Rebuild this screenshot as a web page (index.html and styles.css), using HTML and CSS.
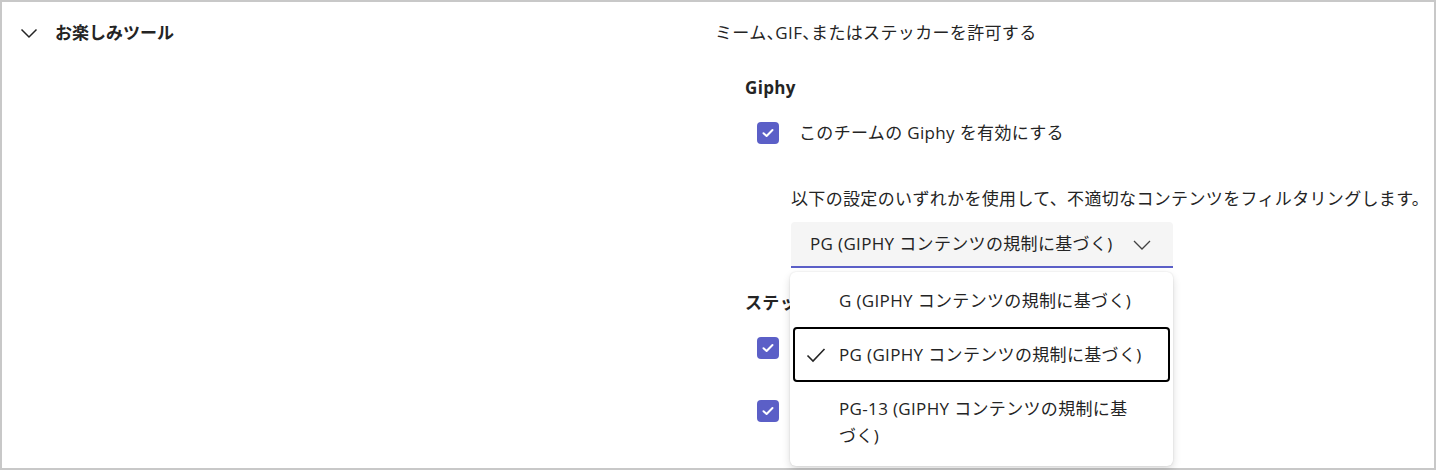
FILE: index.html
```html
<!DOCTYPE html>
<html lang="ja">
<head>
    <meta charset="UTF-8">
    <meta name="viewport" content="width=device-width, initial-scale=1.0">
    <title>チームの設定</title>
    <link rel="stylesheet" href="styles.css">
</head>
<body>
<div class="settings-frame">
    <div class="setting-section">
        <!-- Collapsible section header -->
        <div class="section-head">
            <svg class="chevron" width="18" height="12" viewBox="0 0 18 12">
                <path d="M1.5 2.5 L9 10 L16.5 2.5" fill="none" stroke="#242424" stroke-width="1.5"/>
            </svg>
            <span class="section-title">お楽しみツール</span>
        </div>

        <div class="section-body">
            <div class="section-desc">ミーム、GIF、またはステッカーを許可する</div>

            <div class="group-title">Giphy</div>
            <label class="check-row">
                <span class="checkbox">
                    <svg width="12" height="10" viewBox="0 0 12 10"><path d="M1.5 5.2 L4.6 8 L10.5 2" fill="none" stroke="#fff" stroke-width="2" stroke-linecap="round" stroke-linejoin="round"/></svg>
                </span>
                <span>このチームの Giphy を有効にする</span>
            </label>

            <div class="filter-note">以下の設定のいずれかを使用して、不適切なコンテンツをフィルタリングします。</div>

            <div class="dropdown-wrap">
                <button class="dropdown">
                    <span>PG (GIPHY コンテンツの規制に基づく)</span>
                    <svg class="dropdown-chevron" width="18" height="10" viewBox="0 0 18 10">
                        <path d="M1 1 L9 9 L17 1" fill="none" stroke="#424242" stroke-width="1.3"/>
                    </svg>
                </button>

                <!-- Open listbox of rating options -->
                <ul class="listbox">
                    <li class="option">
                        <span class="option-check"></span>
                        <span>G (GIPHY コンテンツの規制に基づく)</span>
                    </li>
                    <li class="option selected">
                        <span class="option-check">
                            <svg width="20" height="16" viewBox="0 0 20 16"><path d="M1.5 8.5 L7 14 L18.5 2" fill="none" stroke="#242424" stroke-width="1.6"/></svg>
                        </span>
                        <span>PG (GIPHY コンテンツの規制に基づく)</span>
                    </li>
                    <li class="option">
                        <span class="option-check"></span>
                        <span>PG-13 (GIPHY コンテンツの規制に基<br>づく)</span>
                    </li>
                </ul>
            </div>

            <div class="group-title stickers">ステッカー</div>
            <label class="check-row">
                <span class="checkbox">
                    <svg width="12" height="10" viewBox="0 0 12 10"><path d="M1.5 5.2 L4.6 8 L10.5 2" fill="none" stroke="#fff" stroke-width="2" stroke-linecap="round" stroke-linejoin="round"/></svg>
                </span>
                <span>このチームのステッカーを有効にする</span>
            </label>
            <label class="check-row second">
                <span class="checkbox">
                    <svg width="12" height="10" viewBox="0 0 12 10"><path d="M1.5 5.2 L4.6 8 L10.5 2" fill="none" stroke="#fff" stroke-width="2" stroke-linecap="round" stroke-linejoin="round"/></svg>
                </span>
                <span>カスタム ミームの使用を許可する</span>
            </label>
        </div>
    </div>
</div>
</body>
</html>
```

FILE: styles.css
```css
html, body {
    margin: 0;
    height: 100%;
}

body {
    font-family: 'Open Sans', 'Noto Sans CJK JP', sans-serif;
    font-size: 17px;
    line-height: 24px;
    letter-spacing: 0.02em;
    color: #242424;
    background-color: #fff;
    overflow: hidden;
}

.settings-frame {
    box-sizing: border-box;
    height: 100%;
    border: 2px solid #c8c8c8;
    background-color: #fff;
}

.setting-section {
    display: flex;
    padding-top: 19px;
}

.section-head {
    width: 713px;
    display: flex;
    align-items: center;
    padding-left: 18px;
    box-sizing: border-box;
    height: 24px;
}

.chevron {
    margin-right: 17px;
}

.section-title {
    font-weight: 700;
    letter-spacing: 0;
}

.section-body {
    flex-grow: 1;
}

/* half-width commas in the short description line */
.section-desc {
    font-feature-settings: "halt";
    word-spacing: 2px;
}

.group-title {
    font-weight: 700;
    margin: 31px 0 0 30px;
}

.group-title.stickers {
    margin-top: 23px;
}

.check-row {
    display: flex;
    align-items: center;
    gap: 20px;
    margin: 21px 0 0 42px;
}

.check-row.second {
    margin-top: 39px;
}

.checkbox {
    width: 22px;
    height: 22px;
    border-radius: 4px;
    background-color: #5b5fc7;
    display: flex;
    align-items: center;
    justify-content: center;
    flex-shrink: 0;
}

.filter-note {
    margin: 42px 0 0 76px;
}

.dropdown-wrap {
    position: relative;
    width: 382px;
    margin: 11px 0 0 76px;
}

.dropdown {
    font: inherit;
    color: inherit;
    letter-spacing: inherit;
    width: 100%;
    height: 46px;
    display: flex;
    align-items: center;
    justify-content: space-between;
    padding: 0 22px 0 19px;
    background-color: #f5f5f5;
    border: none;
    border-bottom: 2px solid #5b5fc7;
    border-radius: 4px 4px 0 0;
    box-sizing: border-box;
    cursor: pointer;
}

.dropdown-chevron {
    margin-top: 2px;
}

.listbox {
    position: absolute;
    top: 50px;
    left: -1px;
    width: 383px;
    margin: 0;
    padding: 2px 3px 4px;
    box-sizing: border-box;
    list-style: none;
    background-color: #fff;
    border-radius: 6px;
    box-shadow: 0 0 2px rgba(0,0,0,0.12), 0 4px 8px rgba(0,0,0,0.14);
    z-index: 10;
}

.option {
    display: flex;
    align-items: flex-start;
    padding: 11px 12px 11px 11px;
    line-height: 27px;
    white-space: nowrap;
    border: 2px solid transparent;
    border-radius: 4px;
}

.option.selected {
    border-color: #000;
    padding-top: 12px;
    padding-bottom: 12px;
}

.option-check {
    width: 20px;
    height: 27px;
    margin-right: 13px;
    display: flex;
    align-items: center;
    flex-shrink: 0;
}
```
